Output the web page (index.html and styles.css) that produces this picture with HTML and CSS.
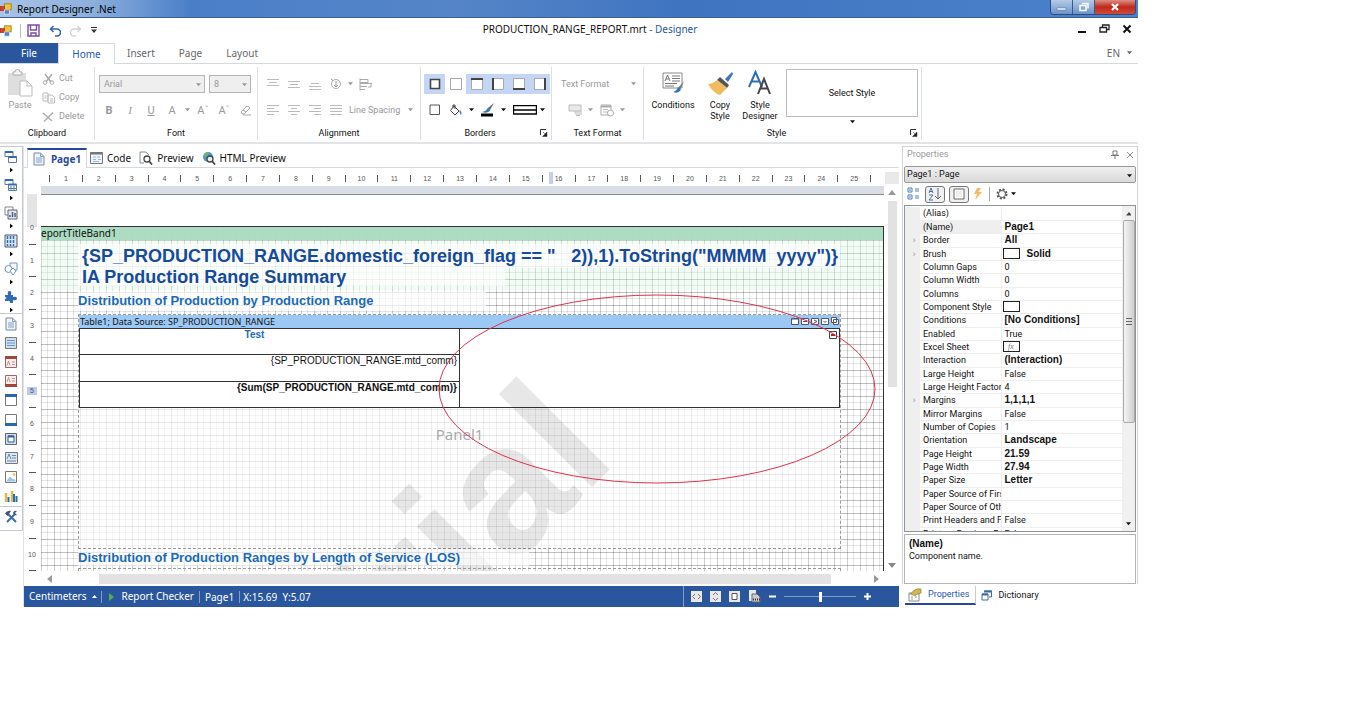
FILE: index.html
```html
<!DOCTYPE html>
<html lang="en">
<head>
  <meta charset="UTF-8">
  <meta name="viewport" content="width=device-width, initial-scale=1.0">
  <title>Report Designer .Net</title>
  <link rel="stylesheet" href="styles.css">
</head>
<body>

<svg class="defs" width="0" height="0">
  <symbol id="app" viewBox="0 0 14 14">
    <rect x="5" y="1" width="8" height="7" fill="#f5c431" stroke="#9b7a1c"/>
    <rect x="0" y="4" width="5" height="5" fill="#d8402c" stroke="#8d2417" stroke-width=".6"/>
    <rect x="5" y="8" width="6" height="5" fill="#5b83c9" stroke="#e5ebf7" stroke-width=".8"/>
  </symbol>
  <symbol id="windows" viewBox="0 0 14 14">
    <path d="M1 1.500h8v5H1zM4.500 6.500h8v6h-8z" fill="#fff" stroke="#5b7ca6"/>
    <path d="M1 1h8v2H1zM4.500 6h8v2h-8z" fill="#2f6cb3"/>
  </symbol>
  <symbol id="arrow" viewBox="0 0 6 4"><path d="M0 0h6L3 3.500z" fill="currentColor"/></symbol>
  <symbol id="right" viewBox="0 0 4 6"><path d="M0 0l4 3-4 3z" fill="currentColor"/></symbol>
  <symbol id="launch" viewBox="0 0 8 8"><path d="M.5 6V.5H6" fill="none" stroke="#333"/><path d="M3 3l2 2M7 3v4.500H2.500z" fill="#222" stroke="#333" stroke-width=".5"/></symbol>
  <symbol id="doc" viewBox="0 0 12 14"><path d="M1 1h6.500L11 4.500V13H1z" fill="#eef3fa" stroke="#7d8794"/><path d="M7.500 1v3.500H11M3 6h6M3 8h6M3 10h6" fill="none" stroke="#7ea4cf"/></symbol>
</svg>

<div class="app">
  <header class="titlebar">
    <svg class="i12"><use href="#app"/></svg>
    <span class="app-name">Report Designer .Net</span>
    <div class="win-buttons">
      <button aria-label="Minimize"><svg width="12" height="8"><path d="M1 5h9v2H1z" fill="#fff" stroke="#4a6488" stroke-width=".5"/></svg></button>
      <button aria-label="Restore"><svg width="12" height="10"><path d="M4 1.500h6v5M2 3.500h6v5H2z" fill="none" stroke="#fff" stroke-width="1.500"/></svg></button>
      <button class="close" aria-label="Close"><svg width="10" height="8"><path d="M2 1l6 6M8 1L2 7" stroke="#fff" stroke-width="2.200"/></svg></button>
    </div>
  </header>

  <div class="quickbar">
    <svg class="i12"><use href="#app"/></svg>
    <span class="divider"></span>
    <button aria-label="Save"><svg width="13" height="13"><path d="M1 1h11v11H1z M3.500 1v5h6V1 M4 12V9h5v3" fill="none" stroke="#7a4b9e" stroke-width="1.400"/></svg></button>
    <button aria-label="Undo"><svg width="12" height="12"><path d="M4.500 1L1.500 4l3 3M1.500 4H8a3 3 0 0 1 0 7H6" fill="none" stroke="#2f64ad" stroke-width="1.500"/></svg></button>
    <button aria-label="Redo"><svg width="12" height="12"><path d="M7.500 1l3 3-3 3M10.500 4H4a3 3 0 0 0 0 7h2" fill="none" stroke="#d3cfd9" stroke-width="1.300"/></svg></button>
    <button aria-label="Customize"><svg width="6" height="7"><path d="M0 .5h6" stroke="#333"/><path d="M0 2.500h6L3 6z" fill="#333"/></svg></button>
    <h1 class="doc-title">PRODUCTION_RANGE_REPORT.mrt <span>- Designer</span></h1>
    <div class="mdi">
      <button aria-label="Minimize document"><svg width="10" height="10"><path d="M1 8h8" stroke="#111" stroke-width="2"/></svg></button>
      <button aria-label="Restore document"><svg width="11" height="10"><path d="M3.500 3V1h6.500v4.500H8M1 3.500h6.500V8H1z" fill="none" stroke="#222" stroke-width="1.300"/></svg></button>
      <button aria-label="Close document"><svg width="10" height="10"><path d="M1.500 1.500l7 7M8.500 1.500l-7 7" stroke="#111" stroke-width="2"/></svg></button>
    </div>
  </div>

  <nav class="tabs">
    <button class="file">File</button>
    <button class="active">Home</button>
    <button>Insert</button>
    <button>Page</button>
    <button>Layout</button>
    <button class="lang">EN <svg class="arr"><use href="#arrow"/></svg></button>
  </nav>

  <div class="ribbon">
    <section class="group clipboard">
      <div class="body">
        <button class="big gray"><svg width="26" height="28"><path d="M1 4h18v22H1z" fill="#dedede"/><path d="M6 6V3h2a2.500 2.500 0 0 1 5 0h2v3z" fill="#f5f5f5" stroke="#aaa"/><path d="M13 12h7l5 5v10H13z" fill="#fff" stroke="#bbb"/><path d="M20 12v5h5" fill="none" stroke="#bbb"/></svg>Paste</button>
        <div class="stack gray">
          <button><svg width="13" height="12"><path d="M3 1l6 8M10 1L4 9" stroke="#aaa" stroke-width="1.500"/><circle cx="3" cy="9.500" r="1.800" fill="none" stroke="#aaa"/><circle cx="10" cy="9.500" r="1.800" fill="none" stroke="#aaa"/></svg>Cut</button>
          <button><svg width="13" height="12"><path d="M1 1h5v8H1zM6 3h4l2.500 2.500V11H6z" fill="#fff" stroke="#bbb"/><path d="M2.500 4h2M2.500 6h2M8 7h3M8 9h3" stroke="#bbb"/></svg>Copy</button>
          <button><svg width="13" height="12"><path d="M1 2l9 8M11 1.500L2 10.500" stroke="#b0b0b0" stroke-width="1.600"/></svg>Delete</button>
        </div>
      </div>
      <h2>Clipboard</h2>
    </section>

    <section class="group font">
      <div class="rows">
        <div class="row">
          <label class="combo"><select aria-label="Font name" disabled><option>Arial</option></select><svg class="arr"><use href="#arrow"/></svg></label>
          <label class="combo size"><select aria-label="Font size" disabled><option>8</option></select><svg class="arr"><use href="#arrow"/></svg></label>
        </div>
        <div class="row gray">
          <button class="ic letter"><b>B</b></button>
          <button class="ic letter serif"><i>I</i></button>
          <button class="ic letter"><u>U</u></button>
          <button class="ic letter">A</button><button class="drop" aria-label="Font color"><svg class="arr"><use href="#arrow"/></svg></button>
          <button class="ic letter grow">A<sup>&#710;</sup></button>
          <button class="ic letter grow">A<sup>&#711;</sup></button>
          <button class="ic" aria-label="Clear"><svg width="12" height="12"><path d="M2 8l6-6 3 2-6 6H3zM4 6l3 2M4 11h8" fill="none" stroke="#aaa"/></svg></button>
        </div>
      </div>
      <h2>Font</h2>
    </section>

    <section class="group align">
      <div class="rows">
        <div class="row gray">
          <button class="ic" aria-label="Top"><svg width="12" height="12"><path d="M0 1.500h12M2 4.500h8M0 7.500h12" stroke="#bbb"/></svg></button>
          <button class="ic" aria-label="Middle"><svg width="12" height="12"><path d="M0 3.500h12M2 6.500h8M0 9.500h12" stroke="#bbb"/></svg></button>
          <button class="ic" aria-label="Bottom"><svg width="12" height="12"><path d="M2 5.500h8M0 8.500h12M0 11.500h12" stroke="#bbb"/></svg></button>
          <button class="ic" aria-label="Rotate"><svg width="12" height="12"><circle cx="6" cy="6" r="4.500" fill="none" stroke="#aaa"/><path d="M6 3v6M4 7l2 2 2-2M1 1l2 1.500" fill="none" stroke="#999"/></svg></button><button class="drop" aria-label="Angle"><svg class="arr"><use href="#arrow"/></svg></button>
          <button class="ic" aria-label="Wrap"><svg width="14" height="13"><path d="M1 .5v12M1 1.500h8v3H1M1 5.500h12M1 8.500h7M1 11.500h5M12 5v4H9" fill="none" stroke="#aaa"/></svg></button>
        </div>
        <div class="row gray">
          <button class="ic" aria-label="Left"><svg width="12" height="12"><path d="M0 1.500h12M0 4.500h7M0 7.500h12M0 10.500h7" stroke="#bbb"/></svg></button>
          <button class="ic" aria-label="Center"><svg width="12" height="12"><path d="M0 1.500h12M3 4.500h6M0 7.500h12M3 10.500h6" stroke="#bbb"/></svg></button>
          <button class="ic" aria-label="Right"><svg width="12" height="12"><path d="M0 1.500h12M5 4.500h7M0 7.500h12M5 10.500h7" stroke="#bbb"/></svg></button>
          <button class="ic" aria-label="Justify"><svg width="12" height="12"><path d="M0 1.500h12M0 4.500h12M0 7.500h12M0 10.500h12" stroke="#bbb"/></svg></button>
          <button class="text spacing">Line Spacing <svg class="arr"><use href="#arrow"/></svg></button>
        </div>
      </div>
      <h2>Alignment</h2>
    </section>

    <section class="group borders">
      <div class="rows">
        <div class="row">
          <button class="ic on" aria-label="All"><svg width="12" height="12"><path d="M1.500 1.500h9v9h-9z" fill="#fff" stroke="#444" stroke-width="1.600"/></svg></button>
          <button class="ic" aria-label="None"><svg width="12" height="12"><path d="M.5.5h11v11H.5z" fill="#fff" stroke="#aaa"/></svg></button>
          <button class="ic on" aria-label="Top border"><svg width="12" height="12"><path d="M.5.5h11v11H.5z" fill="#fff" stroke="#aaa"/><path d="M0 1h12" stroke="#444" stroke-width="2"/></svg></button>
          <button class="ic on" aria-label="Left border"><svg width="12" height="12"><path d="M.5.5h11v11H.5z" fill="#fff" stroke="#aaa"/><path d="M1 0v12" stroke="#444" stroke-width="2"/></svg></button>
          <button class="ic on" aria-label="Bottom border"><svg width="12" height="12"><path d="M.5.5h11v11H.5z" fill="#fff" stroke="#aaa"/><path d="M0 11h12" stroke="#444" stroke-width="2"/></svg></button>
          <button class="ic on" aria-label="Right border"><svg width="12" height="12"><path d="M.5.5h11v11H.5z" fill="#fff" stroke="#aaa"/><path d="M11 0v12" stroke="#444" stroke-width="2"/></svg></button>
        </div>
        <div class="row">
          <button class="ic" aria-label="Shadow"><svg width="12" height="12"><path d="M1 1h9.500v9.500H1z" fill="#fff" stroke="#555"/></svg></button>
          <button class="ic" aria-label="Fill"><svg width="14" height="13"><path d="M5 2l5 5-4 4-4.500-4.500zM4 4V1h2v4" fill="#fff" stroke="#444"/><path d="M10.500 6q3 2 1.500 5-1.500-1-1.500-5" fill="#3f74b5"/></svg></button><button class="drop" aria-label="Fill color"><svg class="arr"><use href="#arrow"/></svg></button>
          <button class="ic" aria-label="Pen"><svg width="15" height="14"><path d="M14 0L8 5l2 2z" fill="#666"/><path d="M8 4.500L10.500 7Q8 11 2 9 6 8.500 8 4.500" fill="#3478bd"/><path d="M1 12h12" stroke="#000" stroke-width="3"/></svg></button><button class="drop" aria-label="Border color"><svg class="arr"><use href="#arrow"/></svg></button>
          <button class="line" aria-label="Border style"><svg width="24" height="10"><path d="M.5.5h23v8.500H.5zM1 5h22" fill="#fff" stroke="#000" stroke-width="1.400"/></svg><svg class="arr"><use href="#arrow"/></svg></button>
        </div>
      </div>
      <h2>Borders</h2>
      <button class="launcher" aria-label="Borders options"><svg width="8" height="8"><use href="#launch"/></svg></button>
    </section>

    <section class="group format">
      <div class="rows">
        <div class="row gray spread"><button class="text">Text Format</button><button class="drop" aria-label="Formats"><svg class="arr"><use href="#arrow"/></svg></button></div>
        <div class="row gray icons">
          <button class="text" aria-label="Currency"><svg width="15" height="12"><path d="M1 1h12v6H1z" fill="#e9e9e9" stroke="#bbb"/><path d="M6 8h8M7 10h7M8 11.500h4" stroke="#bbb"/></svg><svg class="arr"><use href="#arrow"/></svg></button>
          <button class="text" aria-label="Date"><svg width="15" height="13"><path d="M1 1h10v10H1z" fill="#fff" stroke="#aaa"/><path d="M1 2.500h10" stroke="#aaa" stroke-width="2"/><path d="M3 5.500h5M3 8h5" stroke="#bbb"/><circle cx="10.500" cy="9" r="3" fill="#fff" stroke="#aaa"/></svg><svg class="arr"><use href="#arrow"/></svg></button>
        </div>
      </div>
      <h2>Text Format</h2>
    </section>

    <section class="group style">
      <div class="body">
        <button class="big"><svg width="24" height="28"><path d="M2 4h19v15H2z" fill="#fff" stroke="#888"/><path d="M4 12l2.500-6L9 12M5 10h3M11 7h8M11 9.500h8M11 12h8M4 14.500h12M4 17h9" fill="none" stroke="#777"/><path d="M23 12l-6 7 2 2z" fill="#777"/><path d="M17 18l3 3q-3 4-8 2 4-1 5-5" fill="#2e75b9"/></svg>Conditions</button>
        <button class="big"><svg width="26" height="28"><path d="M25 3l-7 7 3 3 5-8z" fill="#3c77b5"/><path d="M13 8l9 8-2 3L10 11z" fill="#555"/><path d="M10 11l10 8-7 7Q6 24 1 15q5 0 9-4" fill="#f0bc5e"/></svg>Copy<br>Style</button>
        <button class="big"><svg width="26" height="28"><path d="M2 18L8.500 3 15 18M4.500 12.500h8" fill="none" stroke="#2e6fb3" stroke-width="2"/><path d="M11 25l6-15 6 15M13.500 19.500h8" fill="none" stroke="#444" stroke-width="2"/></svg>Style<br>Designer</button>
        <div class="gallery">
          <button>Select Style</button>
          <svg class="arr"><use href="#arrow"/></svg>
        </div>
      </div>
      <h2>Style</h2>
      <button class="launcher" aria-label="Style options"><svg width="8" height="8"><use href="#launch"/></svg></button>
    </section>
  </div>

  <main>
    <aside class="toolbox">
      <div class="pairs">
        <button aria-label="Bands"><svg class="i14"><use href="#windows"/></svg><svg class="rt"><use href="#right"/></svg></button>
        <button aria-label="Cross bands"><svg width="14" height="14"><path d="M1 1.500h8v5H1zM4.500 6.500h8v6h-8zM7 8v5M10 8v5M5 10.500h8" fill="#fff" stroke="#5b7ca6"/><path d="M1 1h8v2H1zM4.500 5.500h8v2h-8z" fill="#2f6cb3"/></svg><svg class="rt"><use href="#right"/></svg></button>
        <button aria-label="Components"><svg width="14" height="14"><path d="M1 1h8v8H1z" fill="#fff" stroke="#888"/><path d="M4 4h9v9H4z" fill="#dbe7f5" stroke="#666"/><path d="M6 11V9M8.500 11V6M11 11V7" stroke="#557" stroke-width="1.400"/></svg><svg class="rt"><use href="#right"/></svg></button>
        <button aria-label="Bar codes"><svg width="14" height="14"><path d="M1 1h12v12H1z" fill="#dbe7f5" stroke="#557"/><path d="M3.500 2v10M6.500 2v10M9.500 2v10" stroke="#2f6cb3" stroke-width="1.500" stroke-dasharray="3 1"/></svg><svg class="rt"><use href="#right"/></svg></button>
        <button aria-label="Shapes"><svg width="14" height="14"><path d="M6 1h7v7H6z" fill="#fff" stroke="#6b95c7"/><circle cx="4.500" cy="7" r="3.500" fill="#fff" stroke="#6b95c7"/><path d="M9 6l3 3-3 4-3-4z" fill="#fff" stroke="#6b95c7"/></svg><svg class="rt"><use href="#right"/></svg></button>
        <button aria-label="Maps"><svg width="14" height="14"><path d="M1 5h3Q3 1 5.500 1T7 5h2v2q4-1 4 1.500T9 10v3H6q0-3-2-2H1V9q3-1 0-2z" fill="#2f6cb3"/></svg><svg class="rt"><use href="#right"/></svg></button>
      </div>
      <div class="singles">
        <button aria-label="Report title"><svg class="i14"><use href="#doc"/></svg></button>
        <button aria-label="Page band"><svg width="12" height="12"><path d="M.5.5h11v11H.5z" fill="#cfe0f4" stroke="#777"/><path d="M2 3.500h8M2 6h8M2 8.500h8" stroke="#6b95c7"/></svg></button>
        <button aria-label="Header"><svg width="12" height="12"><path d="M.5.5h11v11H.5z" fill="#fbeeee" stroke="#966"/><path d="M0 1.500h12" stroke="#a3453f" stroke-width="3"/><path d="M2 9.500L3.500 5 5 9.500M7 6h3M7 8.500h3" fill="none" stroke="#b77" stroke-width=".8"/></svg></button>
        <button aria-label="Footer"><svg width="12" height="12"><path d="M.5.5h11v11H.5z" fill="#fbeeee" stroke="#966"/><path d="M0 10.500h12" stroke="#a3453f" stroke-width="3"/><path d="M2 7l1.500-4.500L5 7M7 3.500h3M7 6h3" fill="none" stroke="#b77" stroke-width=".8"/></svg></button>
        <button aria-label="Header band"><svg width="12" height="12"><path d="M.5.5h11v11H.5z" fill="#fff" stroke="#777"/><path d="M0 1.500h12" stroke="#2668b0" stroke-width="3"/></svg></button>
        <button aria-label="Footer band"><svg width="12" height="12"><path d="M.5.5h11v11H.5z" fill="#fff" stroke="#777"/><path d="M0 10.500h12" stroke="#2668b0" stroke-width="3"/></svg></button>
        <button aria-label="Panel"><svg width="12" height="12"><path d="M.5.5h11v11H.5z" fill="#cfe0f4" stroke="#666"/><path d="M3 3h6v6H3z" fill="#fff" stroke="#2f5f99"/><path d="M3 3.500h6" stroke="#2f5f99" stroke-width="2"/></svg></button>
        <button aria-label="Text"><svg width="13" height="12"><path d="M.5.5h12v11H.5z" fill="#dbe7f5" stroke="#777"/><path d="M2 7l2-5 2 5M7 3.500h4M7 6h4M2 9h9" fill="none" stroke="#68a"/></svg></button>
        <button aria-label="Image"><svg width="12" height="12"><path d="M.5.5h11v11H.5z" fill="#fff" stroke="#777"/><path d="M1 10.500l4-5 3 3 1-1 2 3z" fill="#9cc5ea"/><circle cx="9" cy="3.500" r="1.500" fill="#f0d060"/></svg></button>
        <button aria-label="Chart"><svg width="14" height="13"><path d="M2 12V3M8 12V1" stroke="#e3b64f" stroke-width="2.500"/><path d="M4.500 12V7M10 12V4M12.500 12V6" stroke="#2470b5" stroke-width="2"/></svg></button>
      </div>
      <div class="setup">
        <button aria-label="Setup"><svg width="14" height="14"><path d="M3 3l9 9M11 4l-8 8" stroke="#3b6da5" stroke-width="2"/><path d="M1 3.500Q3 0 7 1L3.500 6zM9 3q1-3 4-2l-2 2 2 2q-3 1-4-2" fill="#44566e"/></svg></button>
      </div>
    </aside>

    <section class="designer">
      <div class="page-tabs">
        <button class="active"><svg width="12" height="14"><use href="#doc"/></svg>Page1</button>
        <button><svg width="13" height="12"><path d="M.5.5h12v11H.5z" fill="#eef4fb" stroke="#777"/><path d="M0 1.500h13" stroke="#777" stroke-width="2"/><path d="M3 5h3M7 5h3M3 7.500h3M8 7.500h3M3 9.500h6" stroke="#9bb9de"/></svg>Code</button>
        <button><svg width="14" height="14"><path d="M5 12H1V1h6l3 3" fill="#fff" stroke="#888"/><circle cx="8" cy="8" r="3" fill="#fff" stroke="#444" stroke-width="1.300"/><path d="M10 10l3 3.500" stroke="#444" stroke-width="1.800"/></svg>Preview</button>
        <button><svg width="14" height="14"><circle cx="6" cy="6" r="5" fill="#4f93c9"/><path d="M2 3q3-3 5-1L5 5 3 7z" fill="#6db56b"/><circle cx="8" cy="8" r="3" fill="#e5f0f7" stroke="#444" stroke-width="1.300"/><path d="M10 10l3 3.500" stroke="#444" stroke-width="1.800"/></svg>HTML Preview</button>
      </div>
      <div class="hruler"><div class="cells" id="hruler"></div><span class="mark"></span><span class="corner"></span></div>
      <div class="workspace">
        <div class="vruler"><div class="before"></div><div class="marks" id="vruler"></div></div>
        <div class="canvas">
          <div class="paper">
            <div class="title-zone"></div>
            <div class="band">eportTitleBand1</div>
            <div class="component title"><span>{SP_PRODUCTION_RANGE.domestic_foreign_flag == "</span><span>2)),1).ToString("MMMM&nbsp; yyyy")}</span></div>
            <div class="component subtitle">IA Production Range Summary</div>
            <div class="component heading">Distribution of Production by Production Range</div>
            <div class="panel">
              <div class="table-head">Table1; Data Source: SP_PRODUCTION_RANGE
                <svg width="50" height="9"><g fill="#fff" stroke="#556"><path d="M1.500 1.500h7v6h-7zM11.500 1.500h7v6h-7zM21.500 1.500h7v6h-7zM31.500 1.500h7v6h-7zM41.500.5h5v5h-5zM43.500 2.500h5v5h-5z"/><path d="M1 2h8M13 4.500h4M24 3l3 1.500-3 1.500M33.500 4l1.500 1.500L36.500 4"/></g></svg>
              </div>
              <table>
                <tr><td class="test">Test</td><td rowspan="3" class="empty"><svg width="8" height="8"><path d="M.5.500h7v7h-7z" fill="#fff" stroke="#445"/><path d="M2 4h4" stroke="#a22" stroke-width="2"/></svg></td></tr>
                <tr><td>{SP_PRODUCTION_RANGE.mtd_comm}</td></tr>
                <tr><td><b>{Sum(SP_PRODUCTION_RANGE.mtd_comm)}</b></td></tr>
              </table>
              <div class="panel-name">Panel1</div>
            </div>
            <div class="watermark">Trial</div>
            <div class="component heading second">Distribution of Production Ranges by Length of Service (LOS)</div>
            <div class="next-panel"></div>
            <svg class="ellipse"><ellipse cx="50%" cy="50%" rx="218" ry="94" fill="none" stroke="#e0304a"/></svg>
          </div>
        </div>
        <div class="vscroll"><svg width="8" height="5"><path d="M0 5l4-5 4 5z" fill="#999"/></svg><i></i><svg width="8" height="5"><path d="M0 0l4 5 4-5z" fill="#888"/></svg></div>
      </div>
      <div class="hscroll"><svg width="5" height="8"><path d="M5 0L0 4l5 4z" fill="#999"/></svg><i></i><svg width="5" height="8"><path d="M0 0l5 4-5 4z" fill="#999"/></svg></div>
      <footer class="status">
        <button class="units">Centimeters <svg width="5" height="4"><path d="M0 3l2.500-3L5 3z" fill="#fff"/></svg></button>
        <button class="checker"><svg width="5" height="8"><path d="M0 0l5 4-5 4z" fill="#4fb04f"/></svg>Report Checker</button>
        <span class="page">Page1</span>
        <span class="coords">X:15.69 &nbsp;Y:5.07</span>
        <div class="zoom">
          <button aria-label="Page width"><svg width="11" height="11"><path d="M0 0h11v11H0z" fill="#e8e8e8"/><path d="M4 3L1.500 5.500 4 8M7 3l2.500 2.500L7 8" fill="none" stroke="#777"/></svg></button>
          <button aria-label="Page height"><svg width="11" height="11"><path d="M0 0h11v11H0z" fill="#e8e8e8"/><path d="M3 4l2.500-2.500L8 4M3 7l2.500 2.500L8 7" fill="none" stroke="#777"/></svg></button>
          <button aria-label="Whole page"><svg width="11" height="11"><path d="M0 0h11v11H0z" fill="#e8e8e8"/><path d="M3 2.500h5v6H3z" fill="#fff" stroke="#555"/></svg></button>
          <button aria-label="Zoom 100"><svg width="13" height="13"><path d="M1 0h7v11H1z" fill="#e8e8e8"/><path d="M4 4h5l3 3v5H4z" fill="#ccc" stroke="#667"/><path d="M5 9.500h7" stroke="#334" stroke-width="2" stroke-dasharray="1 1"/></svg></button>
          <button aria-label="Zoom out"><svg width="7" height="7"><path d="M0 3.500h7" stroke="#fff" stroke-width="2"/></svg></button>
          <input type="range" aria-label="Zoom" value="50">
          <button aria-label="Zoom in"><svg width="7" height="7"><path d="M0 3.500h7M3.500 0v7" stroke="#fff" stroke-width="2"/></svg></button>
        </div>
      </footer>
    </section>

    <aside class="props">
      <div class="props-box">
        <div class="props-title">Properties
          <button aria-label="Pin"><svg width="8" height="9"><path d="M2 1h4v4H2zM0 5.500h8M4 5v4" fill="none" stroke="#777"/></svg></button>
          <button aria-label="Close panel"><svg width="8" height="8"><path d="M1 1l6 6M7 1L1 7" stroke="#888"/></svg></button>
        </div>
        <label class="combo object"><select aria-label="Object"><option>Page1 : Page</option></select><svg class="arr"><use href="#arrow"/></svg></label>
        <div class="props-tools">
          <button aria-label="Categories"><svg width="14" height="14"><path d="M1 1h4v4H1zM1 8h4v4H1z" fill="#fff" stroke="#4a80bd"/><path d="M2 3h2M2 10h2M8 2h4M8 4h4M8 9h4M8 11h4" stroke="#4a80bd"/></svg></button>
          <button class="on" aria-label="Alphabetical"><svg width="14" height="14"><path d="M1 6l2-5 2 5M1.500 4.500h3M1 8h4l-4 5h4" fill="none" stroke="#4a6fb0"/><path d="M10 1v11M7 9l3 3 3-3" fill="none" stroke="#666"/></svg></button>
          <button class="on" aria-label="Properties"><svg width="12" height="12"><path d="M1 1h10v10H1z" fill="#fff" stroke="#666"/><path d="M3 3h6v6H3z" fill="#eee"/></svg></button>
          <button aria-label="Events"><svg width="9" height="12"><path d="M4 0h4L5.500 4H9L2 12l2-6H1z" fill="#f3b965"/></svg></button>
          <span></span>
          <button aria-label="Options"><svg width="12" height="12"><circle cx="6" cy="6" r="4.500" fill="none" stroke="#555" stroke-width="2" stroke-dasharray="2 1.530"/><circle cx="6" cy="6" r="3.500" fill="#fff" stroke="#555"/></svg><svg class="arr"><use href="#arrow"/></svg></button>
        </div>
        <div class="props-grid">
          <div class="clip">
            <table>
              <tr><th></th><td>(Alias)</td><td></td></tr>
              <tr class="sel"><th></th><td>(Name)</td><td><b>Page1</b></td></tr>
              <tr><th>&#8250;</th><td>Border</td><td><b>All</b></td></tr>
              <tr><th>&#8250;</th><td>Brush</td><td><i class="swatch"></i><b>Solid</b></td></tr>
              <tr><th></th><td>Column Gaps</td><td>0</td></tr>
              <tr><th></th><td>Column Width</td><td>0</td></tr>
              <tr><th></th><td>Columns</td><td>0</td></tr>
              <tr><th></th><td>Component Style</td><td><i class="swatch"></i></td></tr>
              <tr><th></th><td>Conditions</td><td><b>[No Conditions]</b></td></tr>
              <tr><th></th><td>Enabled</td><td>True</td></tr>
              <tr><th></th><td>Excel Sheet</td><td><i class="swatch fx">fx</i></td></tr>
              <tr><th></th><td>Interaction</td><td><b>(Interaction)</b></td></tr>
              <tr><th></th><td>Large Height</td><td>False</td></tr>
              <tr><th></th><td>Large Height Factor</td><td>4</td></tr>
              <tr><th>&#8250;</th><td>Margins</td><td><b>1,1,1,1</b></td></tr>
              <tr><th></th><td>Mirror Margins</td><td>False</td></tr>
              <tr><th></th><td>Number of Copies</td><td>1</td></tr>
              <tr><th></th><td>Orientation</td><td><b>Landscape</b></td></tr>
              <tr><th></th><td>Page Height</td><td><b>21.59</b></td></tr>
              <tr><th></th><td>Page Width</td><td><b>27.94</b></td></tr>
              <tr><th></th><td>Paper Size</td><td><b>Letter</b></td></tr>
              <tr><th></th><td>Paper Source of Firs</td><td></td></tr>
              <tr><th></th><td>Paper Source of Oth</td><td></td></tr>
              <tr><th></th><td>Print Headers and F</td><td>False</td></tr>
              <tr><th></th><td>Print on Previous P</td><td>False</td></tr>
            </table>
          </div>
          <div class="win-scroll"><svg class="arr"><path d="M0 3.500h6L3 0z" fill="#444"/></svg><i><span></span></i><svg class="arr"><use href="#arrow"/></svg></div>
        </div>
        <div class="hint"><b>(Name)</b><p>Component name.</p></div>
      </div>
      <div class="dock-tabs">
        <button class="active"><svg width="14" height="14"><path d="M1 5h10v8H1z" fill="#fff" stroke="#8a8a8a"/><path d="M1 6h10M3 9h2M3 11h2M7 9h2" stroke="#999"/><path d="M3 6Q6 0 13 1v4L9 6 7 8z" fill="#d9b44a" stroke="#7c8f3a" stroke-width=".7"/></svg>Properties</button>
        <button><svg width="11" height="11"><path d="M3.500 1h7v6H8M1 4h6v6H1z" fill="#fff" stroke="#3d6da5"/><path d="M3 1.500h8M1 4.500h6" stroke="#3d6da5" stroke-width="2"/></svg>Dictionary</button>
      </div>
    </aside>
  </main>
</div>

<script src="script.js"></script>
</body>
</html>
```

FILE: styles.css
```css
* {
  box-sizing: border-box;
}
body {
  margin: 0;
  background: #fff;
  font: 9px/13px Roboto, "Liberation Sans", sans-serif;
  color: #111;
}
button {
  display: flex;
  align-items: center;
  justify-content: center;
  padding: 0;
  border: none;
  background: none;
  font: inherit;
  color: inherit;
  white-space: nowrap;
}
h1, h2, p {
  margin: 0;
  font-size: 9px;
  font-weight: normal;
}
svg {
  display: block;
  flex: none;
}
.defs {
  position: absolute;
}
.arr {
  width: 5px;
  height: 4px;
}
.i12 {
  width: 12px;
  height: 12px;
}
.i14 {
  width: 14px;
  height: 14px;
}
.gray {
  color: #999;
}
.app {
  margin-right: 228px;
}

/* title bar */
.titlebar {
  display: flex;
  align-items: center;
  height: 18px;
  background: linear-gradient(90deg, #a9c3e6 0, #8eb0dd 90px, #4a7fc8 190px, #5585c8 40%, #3f74c0 60%, #4c82cb);
  border-bottom: 1px solid #3d5f92;
  font: 10px/16px "Noto Sans", sans-serif;
  color: #000;
}
.app-name {
  margin-left: 5px;
}
.win-buttons {
  display: flex;
  align-self: flex-start;
  margin: 0 2px 0 auto;
  border: 1px solid #2f4d7c;
  border-top: none;
  border-radius: 0 0 4px 4px;
  overflow: hidden;
}
.win-buttons button {
  width: 22px;
  height: 14px;
  background: linear-gradient(#b4cbe8, #6a93cb);
  border-right: 1px solid #3b5a8a;
}
.win-buttons .close {
  width: 40px;
  border: none;
  background: linear-gradient(#dc8f84, #c0281a 50%, #cf4a38);
}

.quickbar {
  display: flex;
  align-items: center;
  height: 25px;
}
.quickbar .divider {
  width: 1px;
  height: 14px;
  margin: 0 6px 0 8px;
  background: #bbb;
}
.quickbar > button {
  margin-right: 9px;
}
.doc-title {
  flex: 1;
  padding-right: 3px;
  text-align: center;
  font: 10px/14px "Noto Sans", sans-serif;
}
.doc-title span {
  color: #2a569d;
}
.mdi {
  display: flex;
  gap: 12px;
  padding-right: 6px;
}
.quickbar .doc-title, .quickbar .mdi {
  margin-bottom: 4px;
}

/* ribbon tabs */
.tabs {
  display: flex;
  height: 21px;
  border-bottom: 1px solid #d4d8df;
  font: 10px/20px "Noto Sans", sans-serif;
  color: #666;
}
.tabs button {
  height: 20px;
  padding: 0 12px;
}
.tabs .file {
  width: 58px;
  background: #2a569d;
  color: #fff;
}
.tabs .active {
  width: 57px;
  height: 21px;
  border: 1px solid #d4d8df;
  border-bottom: none;
  background: #fff;
  color: #2a56b0;
}
.tabs .lang {
  gap: 7px;
  margin-left: auto;
  padding: 0 6px;
}

/* ribbon */
.ribbon {
  display: flex;
  height: 80px;
  padding-top: 3px;
  border-bottom: 2px solid #e2e4e8;
}
.group {
  position: relative;
  display: flex;
  flex-direction: column;
  flex: none;
  height: 73px;
  border-right: 1px solid #dcdfe4;
}
.group h2 {
  margin-top: auto;
  text-align: center;
}
.clipboard { width: 95px; }
.font, .align { width: 163px; }
.borders { width: 131px; }
.format { width: 92px; }
.style { width: 278px; }
.borders h2, .style h2 {
  padding-right: 12px;
}
.body {
  display: flex;
}
.clipboard .body {
  padding-left: 7px;
  gap: 9px;
}
.big {
  flex-direction: column;
  justify-content: flex-start;
  padding-top: 2px;
  line-height: 11px;
}
.big svg {
  margin-bottom: 3px;
}
.stack {
  display: flex;
  flex-direction: column;
  padding-top: 2px;
}
.stack button {
  justify-content: flex-start;
  gap: 4px;
  height: 19px;
}
.rows {
  padding: 4px 0 0 4px;
}
.row {
  display: flex;
  align-items: center;
  height: 26px;
}
.font .row {
  gap: 1px;
}
.font .row:first-child {
  gap: 4px;
}
.combo {
  position: relative;
  display: block;
  width: 106px;
  color: #999;
}
.combo.size {
  width: 42px;
}
.combo select {
  display: block;
  width: 100%;
  height: 18px;
  padding: 0 4px;
  appearance: none;
  border: 1px solid #b5b5b5;
  border-radius: 0;
  background: #efefef;
  font: inherit;
  color: #999;
  opacity: 1;
}
.combo .arr {
  position: absolute;
  right: 4px;
  top: 8px;
}
.ic {
  flex: none;
  width: 21px;
  height: 20px;
}
.font .ic {
  width: 20px;
}
.letter {
  font-size: 11px;
}
.serif {
  font-family: "Liberation Serif", serif;
}
.grow sup {
  font-size: 9px;
  line-height: 1;
}
.drop {
  width: 9px;
  height: 20px;
}
.on {
  background: #c5d6f5;
}
.borders .rows {
  padding-left: 3px;
}
.borders .drop {
  width: 11px;
}
.line {
  gap: 3px;
  margin-left: 4px;
}
.text {
  gap: 8px;
}
.spacing {
  margin-left: 3px;
}
.icons {
  gap: 7px;
  padding-left: 12px;
}
.icons .text {
  gap: 5px;
}
.spread {
  justify-content: space-between;
  padding: 0 5px;
}
.launcher {
  position: absolute;
  right: 3px;
  bottom: 3px;
}
.style .body {
  padding: 0 3px 0 2px;
}
.style .big {
  width: 40px;
}
.style .big:first-child {
  width: 54px;
}
.gallery {
  flex: 1;
  display: flex;
  flex-direction: column;
  align-items: center;
  gap: 3px;
  padding: 2px 0 0 6px;
}
.gallery button {
  width: 100%;
  height: 48px;
  border: 1px solid #b8bcc4;
}

main {
  display: flex;
  height: 463px;
  padding-top: 2px;
}

/* toolbox */
.toolbox {
  width: 23px;
  height: 385px;
  border: 1px solid #c4c8d0;
  border-left: none;
}
.pairs, .singles, .setup {
  display: flex;
  flex-direction: column;
}
.pairs {
  height: 167px;
  padding-top: 3px;
  justify-content: space-between;
  border-bottom: 1px solid #c4c8d0;
}
.pairs button {
  flex-direction: column;
  gap: 3px;
}
.rt {
  width: 3px;
  height: 6px;
  color: #000;
}
.singles {
  border-bottom: 1px solid #c4c8d0;
}
.singles button {
  height: 19px;
}
.singles button:nth-child(5n) {
  height: 20px;
}
.setup button {
  height: 20px;
}

/* designer */
.designer {
  flex: 1;
  min-width: 0;
  display: flex;
  flex-direction: column;
  margin-right: 3px;
  border-left: 1px solid #e0e2e6;
}
.page-tabs {
  display: flex;
  gap: 8px;
  height: 22px;
  padding: 2px 0 0 3px;
  border-bottom: 1px solid #d4d8df;
  font: 10px/18px "Noto Sans", sans-serif;
}
.page-tabs button {
  gap: 4px;
}
.page-tabs .active {
  width: 60px;
  height: 20px;
  margin-right: -5px;
  gap: 6px;
  border: 1px solid #d4d8df;
  border-top: 2px solid #2a47a0;
  border-bottom: none;
  background: #fff;
  font-weight: bold;
  color: #2a47a0;
}
.hruler {
  position: relative;
  display: flex;
  align-items: center;
  height: 18px;
  padding: 2px 0 0 25px;
}
.cells {
  flex: 1;
  display: flex;
  margin-right: 14px;
  border-right: 1px solid #555;
}
.cells span {
  flex: 1;
  height: 7px;
  border-left: 1px solid #555;
  font: 7px/7px "Liberation Sans", sans-serif;
  text-align: center;
  color: #555;
}
.hruler .mark {
  position: absolute;
  left: 60%;
  top: 4px;
  width: 4px;
  height: 12px;
  background: #a9bce6;
  opacity: .7;
}
.corner {
  width: 14px;
  height: 12px;
  background: #e9e9e9;
}
.workspace {
  flex: 1;
  display: flex;
  min-height: 0;
}
.vruler {
  width: 14px;
  margin-right: 3px;
  padding: 8px 1px 0 3px;
}
.before {
  height: 33px;
  background: #e4e4e4;
}
.marks {
  display: flex;
  flex-direction: column;
  justify-content: space-between;
  height: 351px;
  margin-top: -3px;
  font: 7px/8px "Liberation Sans", sans-serif;
  text-align: center;
  color: #555;
}
.marks i {
  height: 8px;
  background: linear-gradient(#555, #555) center / 7px 1px no-repeat;
}
.marks .now {
  background: #bccbee;
}
.canvas {
  flex: 1;
  min-width: 0;
  padding-top: 32px;
  border-top: 8px solid #d9dde5;
  box-shadow: inset 0 1px #8a8c90;
  overflow: hidden;
}

/* report page, items are placed freely on it */
.paper {
  position: relative;
  height: 345px;
  border: solid #333;
  border-width: 1px 1px 0 0;
  background:
    repeating-linear-gradient(90deg, #0003 0 1px, transparent 1px 6px, #0000001a 6px 7px, transparent 7px 13px),
    repeating-linear-gradient(#00000040 0 1px, transparent 1px 6px, #0000001a 6px 7px, transparent 7px 13px);
  overflow: hidden;
}
.title-zone {
  position: absolute;
  inset: 0 0 auto 0;
  height: 63px;
  background: #d5f5e055;
}
.band {
  position: relative;
  height: 13px;
  background: #a9dabfee;
  font: 10px/12px "Noto Sans", sans-serif;
}
.component {
  position: absolute;
  left: 37px;
  background: #ffffffb0;
  font-family: "Liberation Sans", sans-serif;
  font-weight: bold;
  white-space: nowrap;
}
.title {
  top: 17px;
  right: 43px;
  display: flex;
  justify-content: space-between;
  padding: 0 2px 0 4px;
  font-size: 18px;
  line-height: 24px;
  color: #154a9c;
}
.subtitle {
  top: 41px;
  width: 427px;
  padding-left: 4px;
  font-size: 18px;
  line-height: 18px;
  color: #154a9c;
}
.heading {
  top: 64px;
  width: 408px;
  font-size: 13px;
  line-height: 20px;
  color: #1a6ab8;
}
.panel {
  position: absolute;
  left: 37px;
  right: 42px;
  top: 87px;
  height: 235px;
  border: 1px dashed #999;
  background: #ffffffa0;
}
.table-head {
  display: flex;
  justify-content: space-between;
  align-items: center;
  height: 13px;
  padding-left: 1px;
  background: #9cc8f5;
  font: 9px/12px "Noto Sans", sans-serif;
}
.panel table {
  width: 100%;
  height: 80px;
  border-collapse: collapse;
  background: #fff;
  font: 10px/12px "Liberation Sans", sans-serif;
}
.panel td {
  width: 50%;
  height: 26px;
  padding: 0 2px 0 0;
  border: 1px solid #333;
  text-align: right;
  vertical-align: top;
}
.panel .test {
  padding-right: 30px;
  text-align: center;
  font-weight: bold;
  color: #1a6ab8;
}
.panel .empty svg {
  margin: 2px 0 0 auto;
}
.panel-name {
  margin-top: 16px;
  text-align: center;
  font: 15px/20px "Noto Sans", sans-serif;
  color: #aaa;
}
.watermark {
  position: absolute;
  left: 333px;
  top: 336px;
  font: bold 182px/1 "Liberation Sans", sans-serif;
  color: #00000018;
  transform: rotate(-45deg);
  transform-origin: 0 100%;
}
.second {
  top: 322px;
  width: 451px;
  background: #ffffffa0;
  line-height: 17px;
}
.next-panel {
  position: absolute;
  left: 37px;
  right: 42px;
  top: 341px;
  height: 10px;
  border: 1px dashed #999;
}
.ellipse {
  position: absolute;
  right: 7px;
  top: 67px;
  width: 438px;
  height: 190px;
}

.vscroll {
  display: flex;
  flex-direction: column;
  align-items: center;
  width: 15px;
  padding: 4px 1px 3px 2px;
}
.vscroll i {
  width: 9px;
  height: 186px;
  margin: 6px 0 auto;
  background: #e2e2e2;
}
.hscroll {
  display: flex;
  align-items: center;
  justify-content: space-between;
  height: 15px;
  padding: 0 20px 0 23px;
}
.hscroll i {
  flex: 1;
  height: 10px;
  margin: 0 43px 0 47px;
  background: #e2e2e2;
}

.status {
  display: flex;
  align-items: center;
  height: 21px;
  padding-left: 5px;
  background: #2a569d;
  font: 10px/13px "Noto Sans", sans-serif;
  color: #fff;
}
.status > * {
  height: 12px;
  padding-right: 5px;
  border-right: 1px solid #7f9ccb;
}
.status .units {
  gap: 5px;
  padding-right: 4px;
}
.checker {
  gap: 8px;
}
.status .checker {
  padding-left: 7px;
}
.status .page {
  padding-left: 5px;
}
.status .coords {
  padding-left: 3px;
  border: none;
}
.status .zoom {
  display: flex;
  align-items: center;
  gap: 8px;
  height: 21px;
  margin-left: auto;
  padding: 0 28px 0 7px;
  border: none;
  border-left: 1px solid #7f9ccb;
}
.zoom input {
  width: 72px;
  height: 12px;
  margin: 0;
  appearance: none;
  background: linear-gradient(#7f9ccb, #7f9ccb) center / 100% 1px no-repeat;
}
.zoom input::-webkit-slider-thumb {
  appearance: none;
  width: 3px;
  height: 10px;
  background: #fff;
}

/* properties panel */
.props {
  width: 236px;
}
.props-box {
  height: 438px;
  padding: 0 1px;
  border: 1px solid #d0d3d8;
  border-bottom: none;
}
.props-title {
  display: flex;
  align-items: center;
  height: 19px;
  padding: 0 2px 4px 3px;
  color: #999;
}
.props-title button {
  margin-left: 7px;
}
.props-title button:first-of-type {
  margin-left: auto;
}
.object {
  width: 100%;
  color: #111;
}
.combo.object select {
  height: 17px;
  padding: 0 2px;
  border-color: #999;
  border-radius: 2px;
  background: linear-gradient(#f0f0f0, #d9d9d9);
  color: #111;
}
.props-tools {
  display: flex;
  align-items: center;
  gap: 4px;
  height: 22px;
  padding-left: 3px;
}
.props-tools .on {
  width: 20px;
  height: 17px;
  border: 1px solid #777;
  border-radius: 3px;
  background: #f0f0f0;
}
.props-tools span {
  width: 1px;
  height: 14px;
  margin: 0 2px 0 3px;
  background: #aaa;
}
.props-tools button {
  gap: 3px;
}
.props-grid {
  display: flex;
  height: 327px;
  border: 1px solid #8e9299;
}
.clip {
  flex: 1;
  padding-top: 1px;
  overflow: hidden;
}
.clip table {
  width: 100%;
  table-layout: fixed;
  border-collapse: collapse;
}
.clip tr {
  height: 13px;
}
.clip tr:nth-child(3n) {
  height: 14px;
}
.clip th, .clip td {
  padding: 0 0 0 3px;
  border-bottom: 1px solid #eee;
  line-height: 12px;
  overflow: hidden;
  white-space: nowrap;
}
.clip th {
  width: 15px;
  background: #efefef;
  border-color: #efefef;
  font-weight: normal;
  color: #888;
}
.clip td:nth-child(2) {
  width: 81px;
  border-right: 1px solid #eee;
}
.clip .sel td:nth-child(2) {
  background: #efefef;
}
.clip b, .hint b {
  font-family: "Liberation Sans", sans-serif;
  font-size: 10px;
}
.swatch {
  display: inline-block;
  width: 17px;
  height: 11px;
  margin: 0 7px 0 -2px;
  border: 1px solid #222;
  vertical-align: top;
}
.fx {
  font: italic 8px/9px "Liberation Serif", serif;
  text-align: center;
  color: #777;
}
.win-scroll {
  display: flex;
  flex-direction: column;
  align-items: center;
  width: 13px;
  padding: 6px 0 5px;
  background: #f0f0f0;
}
.win-scroll i {
  display: flex;
  align-items: center;
  justify-content: center;
  width: 12px;
  height: 203px;
  margin: 4px 0 auto;
  border: 1px solid #aaa;
  border-radius: 2px;
  background: linear-gradient(90deg, #f4f4f4, #cfcfcf);
}
.win-scroll span {
  width: 6px;
  height: 7px;
  background: repeating-linear-gradient(#666 0 1px, transparent 1px 3px);
}
.hint {
  height: 50px;
  margin-top: 2px;
  padding: 2px 4px;
  border: 1px solid #b5b5b5;
}
.hint p {
  line-height: 11px;
}
.dock-tabs {
  display: flex;
  gap: 5px;
  height: 21px;
  padding: 2px 0 0 3px;
}
.dock-tabs button {
  gap: 6px;
}
.dock-tabs .active {
  padding: 0 6px 0 3px;
  border-bottom: 2px solid #2a47a0;
  border-right: 1px solid #ccc;
  color: #2a56b0;
}
```

FILE: script.js
```js
const hruler = document.getElementById("hruler");
for (let i = 1; i <= 25; i++) {
  const cell = document.createElement("span");
  cell.textContent = i;
  hruler.appendChild(cell);
}

const vruler = document.getElementById("vruler");
for (let i = 0; i <= 10; i++) {
  const num = document.createElement("span");
  num.textContent = i;
  if (i === 5) num.className = "now";
  vruler.appendChild(num);
  vruler.appendChild(document.createElement("i"));
}
```
